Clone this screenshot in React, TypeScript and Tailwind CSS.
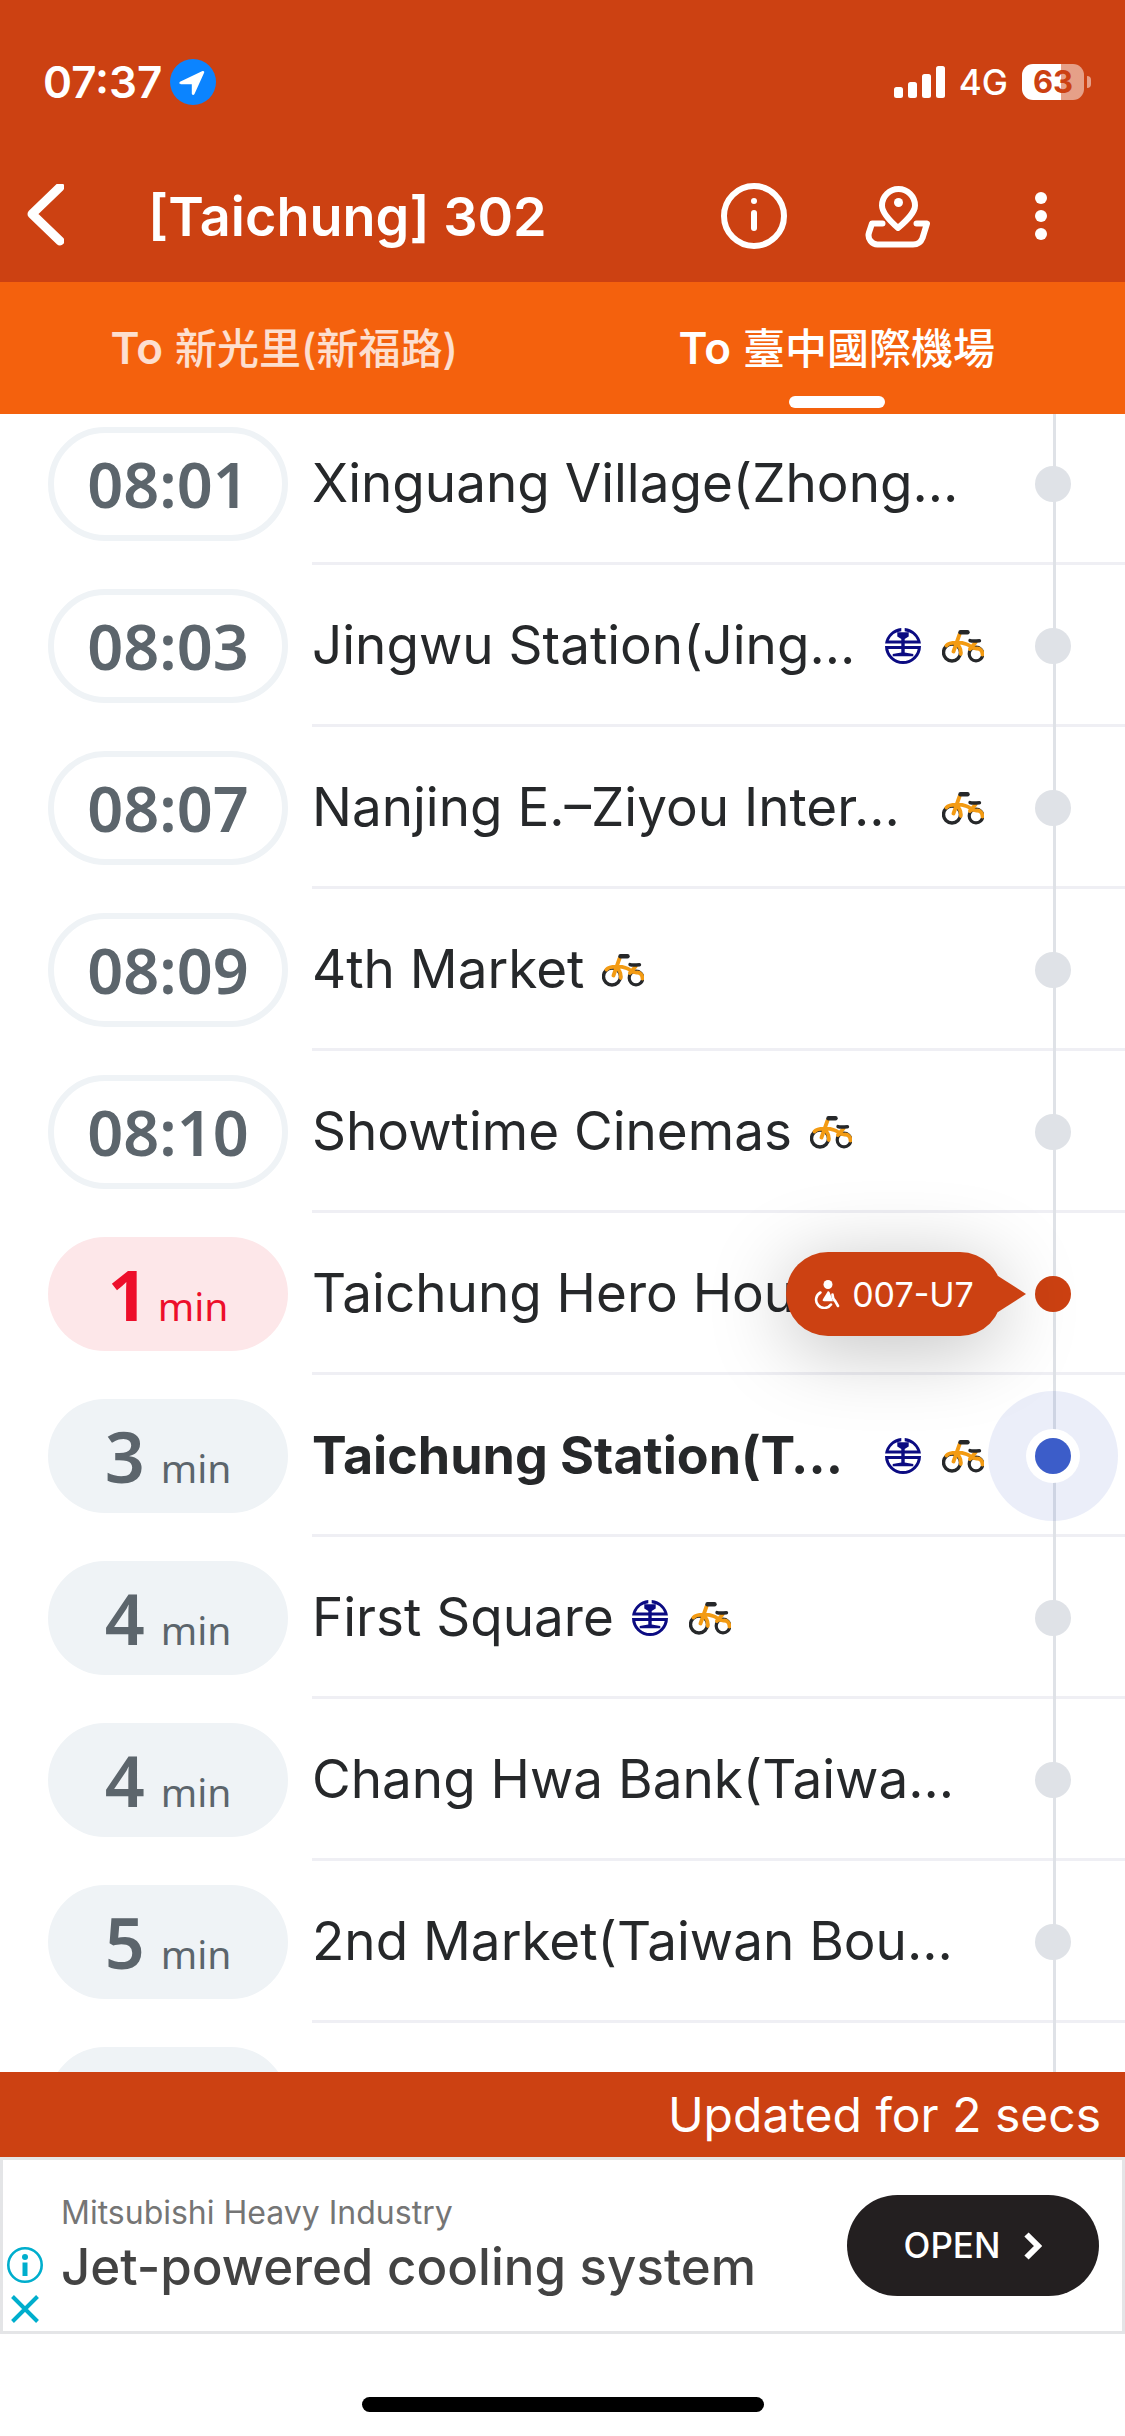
import React, { useState } from 'react';

interface Stop {
  eta: string;
  unit?: string;
  name: string;
  rail?: boolean;
  bike?: boolean;
  bus?: string;
  nearest?: boolean;
}

const TABS = ['新光里(新福路)', '臺中國際機場'];

const STOPS: Stop[] = [
  { eta: '08:01', name: 'Xinguang Village(Zhong…' },
  { eta: '08:03', name: 'Jingwu Station(Jing…', rail: true, bike: true },
  { eta: '08:07', name: 'Nanjing E.–Ziyou Inter…', bike: true },
  { eta: '08:09', name: '4th Market', bike: true },
  { eta: '08:10', name: 'Showtime Cinemas', bike: true },
  { eta: '1', unit: 'min', name: 'Taichung Hero Hou', bus: '007-U7' },
  { eta: '3', unit: 'min', name: 'Taichung Station(T…', rail: true, bike: true, nearest: true },
  { eta: '4', unit: 'min', name: 'First Square', rail: true, bike: true },
  { eta: '4', unit: 'min', name: 'Chang Hwa Bank(Taiwa…' },
  { eta: '5', unit: 'min', name: '2nd Market(Taiwan Bou…' },
  { eta: '', unit: '', name: '' },
];

const RailIcon = () => (
  <svg viewBox="0 0 36 36" className="w-9 h-9 shrink-0" fill="#0b0b82">
    <path d="M16.300 0.100A18 18 0 0 0 0.100 15.600H35.900A18 18 0 0 0 19.700 0.100V3.200A15 15 0 0 1 32.300 12.600H19.700V11L23.700 8.600V4.300H12.300V8.600L16.300 11V12.600H3.700A15 15 0 0 1 16.300 3.200Z" />
    <path d="M16.300 15H19.700V19H16.300Z" />
    <path d="M0 18H36A18 18 0 0 1 0 18ZM3.300 21A15 15 0 0 0 32.700 21H19.700V24.500L28.300 26V28.300H7.700V26L16.300 24.500V21Z" fillRule="evenodd" />
  </svg>
);

const BikeIcon = () => (
  <svg viewBox="0 0 42 33" className="w-[42px] h-[33px] shrink-0" fill="none" strokeLinecap="round">
    <circle cx="10" cy="22.500" r="8.500" stroke="#26282a" strokeWidth="3.400" />
    <circle cx="34" cy="24" r="6.800" stroke="#26282a" strokeWidth="3.200" />
    <path d="M4.500 15.500C8 11.500 20 12.500 24 14C29 15.500 30 19 35 18.500C38.500 18.500 40.500 21 40.500 24.500M11.500 21.500L17.500 4.500M14 14.500C18 15.500 19 18.500 18.800 24M28 19L33.500 12.500" stroke="#f39b13" strokeWidth="3.800" />
    <path d="M18.500 2.200H25.500" stroke="#26282a" strokeWidth="4.400" />
    <path d="M28 10.600C31 11.600 34 10.800 37.500 10.800" stroke="#26282a" strokeWidth="3.400" />
  </svg>
);

const WheelchairIcon = () => (
  <svg viewBox="0 0 26 29" className="w-[26px] h-[29px] shrink-0" fill="none" stroke="#fff" strokeWidth="2.600" strokeLinecap="round">
    <circle cx="14" cy="4.500" r="4.500" fill="#fff" stroke="none" />
    <path d="M14 11L8.800 19.500C8.300 20.600 8.800 21.200 10 21.200H19L15.500 12Z" fill="#fff" stroke="none" />
    <path d="M6.500 12.500A8.200 8.200 0 1 0 17 24.500M18.500 14.500C18.500 18 20 20 21.500 21.500L24 26" />
  </svg>
);

const EtaPill: React.FC<{ stop: Stop }> = ({ stop }) => {
  if (stop.unit === undefined) {
    return (
      <div className="w-60 h-[114px] shrink-0 rounded-full border-6 border-[#eff3f6] flex items-center justify-center text-[63px] font-semibold text-[#5c656c] font-['Noto_Sans',sans-serif]">
        {stop.eta}
      </div>
    );
  }

  const tone = stop.bus ? 'gap-2.5 bg-[#fde7e9] text-[#ed0f2b]' : 'gap-4 bg-[#eff3f6] text-[#5c656c]';
  const weight = stop.bus ? 'font-bold' : 'font-semibold';

  return (
    <div className={`w-60 h-[114px] shrink-0 rounded-full flex items-baseline justify-center leading-[114px] font-['Noto_Sans',sans-serif] ${tone}`}>
      <span className={`text-[70px] ${weight}`}>{stop.eta}</span>
      <span className="text-[39px]">{stop.unit}</span>
    </div>
  );
};

const BusBubble: React.FC<{ plate: string }> = ({ plate }) => (
  <div className="absolute z-10 right-[123px] top-1/2 -translate-y-1/2 w-54 h-21 rounded-full bg-[#cc4112] shadow-[0_12px_80px_rgba(0,0,0,0.25)] flex items-center justify-center gap-3 text-white text-[34px]">
    <WheelchairIcon />
    {plate}
    <svg viewBox="0 0 28 36" className="absolute left-full -ml-1 w-7 h-9" fill="#cc4112">
      <path d="M0 0L28 18L0 36Z" />
    </svg>
  </div>
);

const StopDot: React.FC<{ stop: Stop }> = ({ stop }) => {
  if (stop.nearest) {
    return (
      <div className="relative w-[130px] h-[130px] rounded-full bg-[#3c5dc9]/10 flex items-center justify-center">
        <div className="w-[54px] h-[54px] rounded-full bg-white flex items-center justify-center">
          <div className="w-9 h-9 rounded-full bg-[#3c5dc9]" />
        </div>
      </div>
    );
  }
  return <div className={`relative w-9 h-9 rounded-full ${stop.bus ? 'bg-[#cc4112]' : 'bg-[#dfe2e7]'}`} />;
};

const StopRow: React.FC<{ stop: Stop }> = ({ stop }) => (
  <li className="relative h-[162px] shrink-0 flex items-center pl-12">
    <EtaPill stop={stop} />
    <div className="ml-6 flex-1 min-w-0 h-full pt-[3px] border-b-3 border-[#efeff4] flex items-center">
      <div className={`flex-1 min-w-0 flex items-center whitespace-nowrap text-[#26282a] ${stop.nearest ? 'text-[52px] font-bold' : 'text-[53px]'}`}>
        <span>{stop.name}</span>
        {(stop.rail || stop.bike) && (
          <span className={`flex items-center gap-[21px] pl-[18px] ${stop.name.endsWith('…') ? 'ml-auto' : ''}`}>
            {stop.rail && <RailIcon />}
            {stop.bike && <BikeIcon />}
          </span>
        )}
      </div>
      <div className="w-[141px] shrink-0" />
    </div>
    {/* route line and its marker */}
    <div className="absolute right-0 inset-y-0 w-36 flex items-center justify-center">
      <div className="absolute left-1/2 inset-y-0 w-[3px] bg-[#dfe2e7]" />
      <StopDot stop={stop} />
    </div>
    {stop.bus && <BusBubble plate={stop.bus} />}
  </li>
);

const StatusBar = () => (
  <div className="h-[150px] pt-3.5 pl-[43px] pr-[34px] flex items-center text-white">
    <span className="text-[44px] font-semibold">07:37</span>
    <svg viewBox="0 0 46 46" className="ml-2 w-[46px] h-[46px]">
      <circle cx="23" cy="23" r="23" fill="#0b84ff" />
      <path d="M32.500 12C33.800 11.500 34.600 12.600 34.100 13.800L24.500 35C23.800 36.600 21.800 36.300 21.800 34.600V25.200H11C9.200 25.200 8.800 23.300 10.500 22.500Z" fill="#fff" />
    </svg>
    <svg viewBox="0 0 51 32" className="ml-auto w-[51px] h-8" fill="#fff">
      <rect x="0" y="21" width="9" height="11" rx="2.500" />
      <rect x="14" y="16" width="9" height="16" rx="2.500" />
      <rect x="28" y="8" width="9" height="24" rx="2.500" />
      <rect x="42" y="0" width="9" height="32" rx="2.500" />
    </svg>
    <span className="ml-3.5 text-[35px] font-medium">4G</span>
    <div className="ml-3.5 w-[62px] h-9 rounded-[11px] bg-linear-to-r from-white from-63% to-white/50 to-63% flex items-center justify-center text-[31px] font-bold text-[#cc4112]">
      63
    </div>
    <div className="ml-[3px] w-1 h-3 rounded-r-full bg-white/50" />
  </div>
);

const Header = () => (
  <div className="h-33 pl-6.5 pr-[78px] flex items-center text-white">
    <button aria-label="Back">
      <svg viewBox="0 0 38 64" className="w-[38px] h-16" fill="none" stroke="#fff" strokeWidth="9" strokeLinecap="round" strokeLinejoin="round">
        <path d="M34 3L6 30L34 57" />
      </svg>
    </button>
    <h1 className="ml-21 flex-1 text-[54px] font-semibold whitespace-nowrap">[Taichung] 302</h1>
    <div className="flex items-center">
      <button aria-label="Route info">
        <svg viewBox="0 0 66 66" className="w-[66px] h-[66px]" fill="none" stroke="#fff" strokeWidth="6" strokeLinecap="round">
          <circle cx="33" cy="33" r="30" />
          <path d="M33 30V45" />
          <circle cx="33" cy="18" r="3" fill="#fff" stroke="none" />
        </svg>
      </button>
      <button aria-label="Map" className="ml-[78px]">
        <svg viewBox="0 0 66 66" className="w-[66px] h-[66px]" fill="none" stroke="#fff" strokeWidth="6" strokeLinecap="round" strokeLinejoin="round">
          <path d="M33 45C25 38 17 30 17 22.500A16.500 16.500 0 0 1 50 22.500C50 30 41 38 33 45Z" />
          <circle cx="33.500" cy="19.500" r="4.500" fill="#fff" stroke="none" />
          <path d="M17.500 40.500H7L4 49.500C2 56 7 61.500 12.500 61.500H48C53 61.500 56 59 57.500 55L62 40.500H51.500" />
        </svg>
      </button>
      <button aria-label="More" className="ml-26">
        <svg viewBox="0 0 12 48" className="w-3 h-12" fill="#fff">
          <circle cx="6" cy="6" r="6" />
          <circle cx="6" cy="24" r="6" />
          <circle cx="6" cy="42" r="6" />
        </svg>
      </button>
    </div>
  </div>
);

const AdBanner = () => (
  <div className="h-[177px] shrink-0 border-3 border-[#e4e5e7] flex items-center pl-1 pr-[23px]">
    <div className="self-end pb-2 flex flex-col items-center gap-3">
      <button aria-label="Ad info" className="h-9">
        <svg viewBox="0 0 36 36" className="w-9 h-9" fill="#00aecd">
          <circle cx="18" cy="18" r="16.700" fill="none" stroke="#00aecd" strokeWidth="2.600" />
          <circle cx="18" cy="10" r="3" />
          <path d="M15.500 15.500H20.500V29H15.500Z" />
        </svg>
      </button>
      <button aria-label="Close ad" className="h-7">
        <svg viewBox="0 0 28 28" className="w-7 h-7" fill="none" stroke="#00aecd" strokeWidth="4">
          <path d="M1.500 1.500L26.500 26.500M26.500 1.500L1.500 26.500" />
        </svg>
      </button>
    </div>
    <div className="ml-[18px] flex-1 pb-1.5 whitespace-nowrap">
      <p className="text-[32px] leading-12 text-[#757575]">Mitsubishi Heavy Industry</p>
      <p className="text-[51px] leading-15 font-medium text-[#434343]">Jet-powered cooling system</p>
    </div>
    <button className="w-63 h-[101px] rounded-full bg-[#231f20] flex items-center justify-center gap-6 text-white text-[35px] font-medium">
      OPEN
      <svg viewBox="0 0 18 28" className="w-[18px] h-7" fill="none" stroke="#fff" strokeWidth="6">
        <path d="M2.500 2.500L14 14L2.500 25.500" />
      </svg>
    </button>
  </div>
);

const App: React.FC = () => {
  const [activeTab, setActiveTab] = useState(1);

  return (
    <div className="h-screen flex flex-col overflow-hidden bg-white font-['Inter','Noto_Sans_CJK_TC',sans-serif]">
      <header className="shrink-0 bg-[#cc4112]">
        <StatusBar />
        <Header />
      </header>

      <nav className="h-33 shrink-0 pl-2 pr-3 flex bg-[#f4610d]">
        {TABS.map((tab, i) => (
          <button
            key={tab}
            onClick={() => setActiveTab(i)}
            className={`relative flex-1 flex items-center justify-center gap-3 text-[42px] font-medium ${i === activeTab ? 'text-white' : 'text-white/80'}`}
          >
            <span className="text-[44px] font-semibold">To</span>
            <span>{tab}</span>
            {i === activeTab && <span className="absolute bottom-1.5 left-1/2 -translate-x-1/2 w-24 h-3 rounded-full bg-white" />}
          </button>
        ))}
      </nav>

      <main className="flex-1 min-h-0 overflow-hidden">
        <ul className="-mt-[11px] flex flex-col">
          {STOPS.map((stop, i) => (
            <StopRow key={i} stop={stop} />
          ))}
        </ul>
      </main>

      <div className="h-[85px] shrink-0 px-6 flex items-center justify-end bg-[#cc4112] text-white text-[48px]">
        Updated for 2 secs
      </div>

      <AdBanner />

      <div className="h-[102px] shrink-0 pb-6 flex items-end justify-center">
        <div className="w-[402px] h-[15px] rounded-full bg-black" />
      </div>
    </div>
  );
};

export default App;
